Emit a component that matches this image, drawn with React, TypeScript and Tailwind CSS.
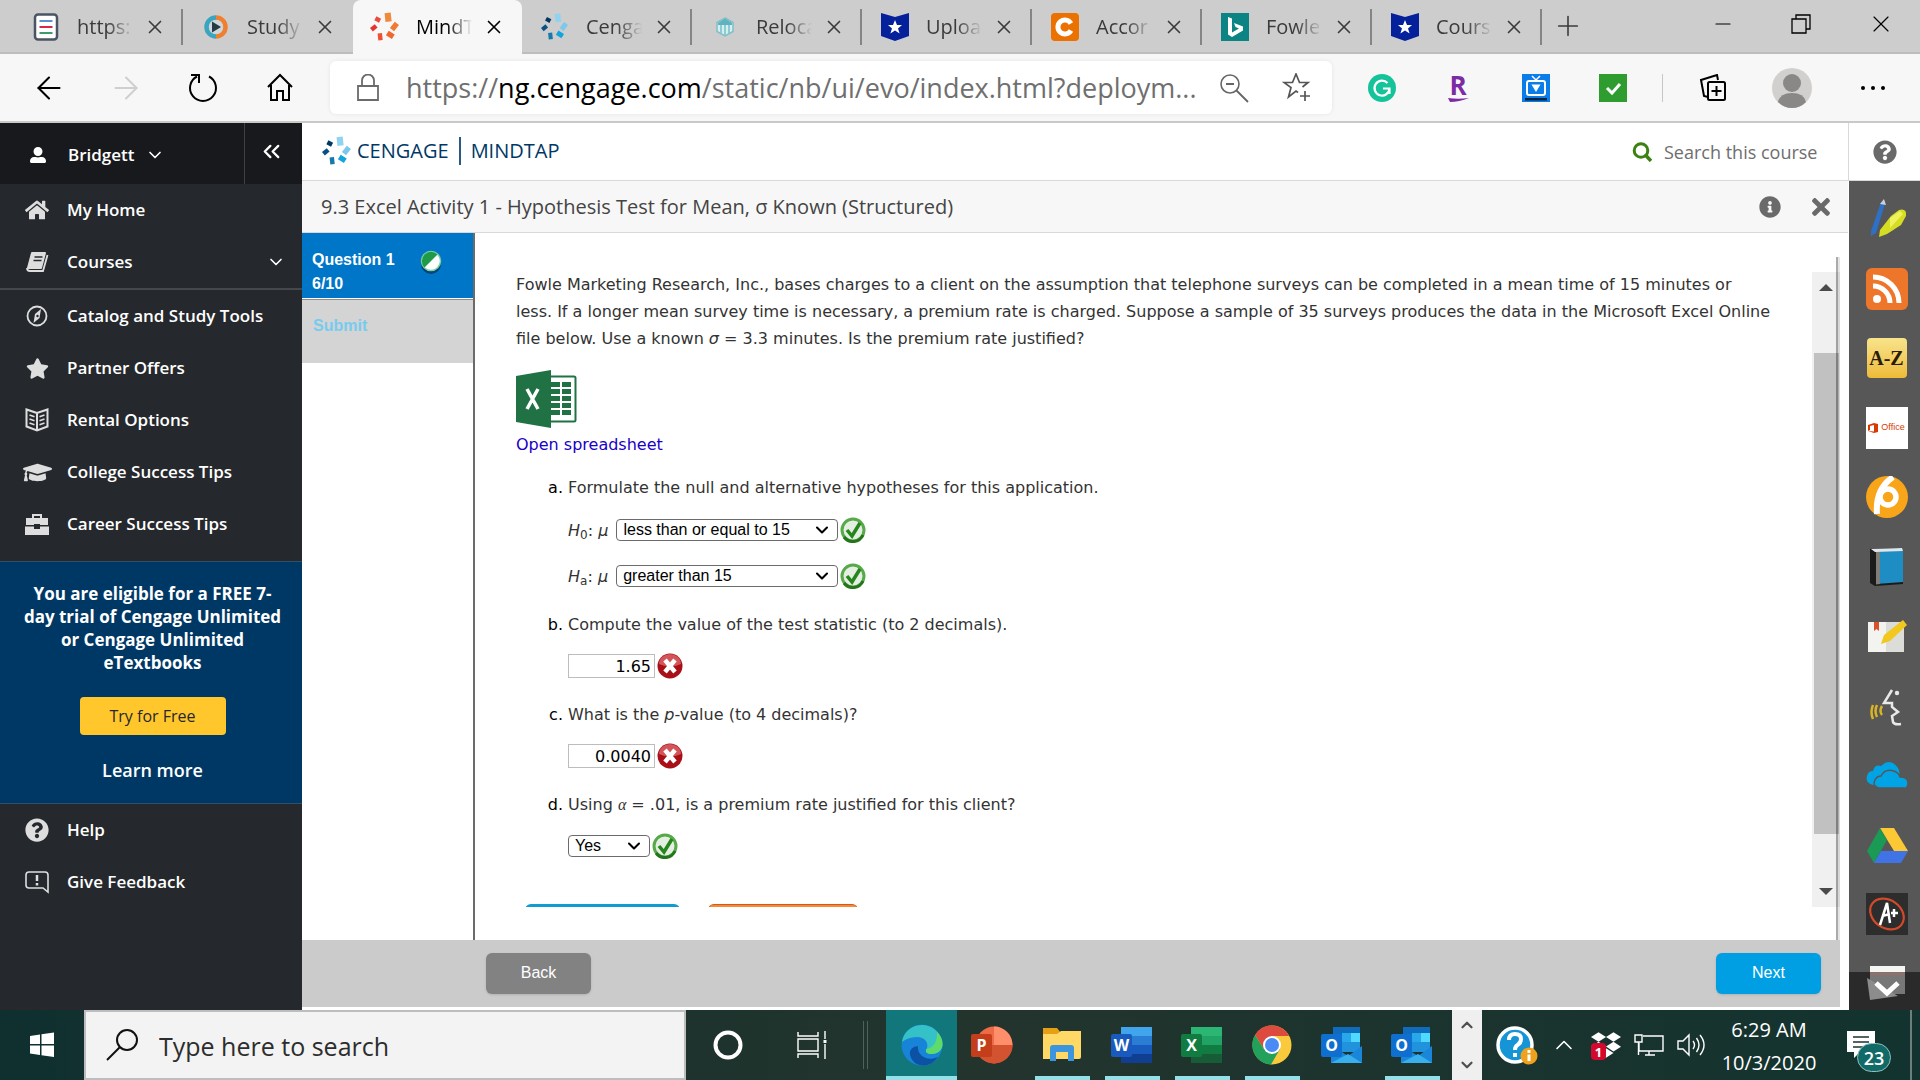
import React from "react";
import {
  ArrowLeft, ArrowRight, X, Plus, Minus, ChevronDown, ChevronUp, ChevronsLeft,
} from "lucide-react";
import { FaHome, FaStar, FaGraduationCap, FaQuestionCircle, FaInfoCircle, FaUserAlt, FaTimes, FaDropbox } from "react-icons/fa";

type Kids = { children: React.ReactNode };

function Svg({ s = 28, box = 28, children }: Kids & { s?: number; box?: number }) {
  return <svg width={s} height={s} viewBox={`0 0 ${box} ${box}`} fill="none" className="shrink-0" aria-hidden="true">{children}</svg>;
}

function Burst({ s = 34, c }: { s?: number; c: string[] }) {
  return (
    <Svg s={s} box={34}>
      <rect x="17" y="1" width="7" height="10" fill={c[0]} transform="rotate(-6 20 6)" />
      <rect x="6" y="6" width="6" height="5" fill={c[1]} transform="rotate(28 9 8)" />
      <rect x="1" y="15" width="7" height="5" fill={c[2]} transform="rotate(-40 5 18)" />
      <rect x="25" y="12" width="6" height="9" fill={c[3]} transform="rotate(38 28 16)" />
      <rect x="19" y="23" width="8" height="6" fill={c[4]} transform="rotate(32 23 26)" />
      <rect x="9" y="24" width="5" height="8" fill={c[5]} transform="rotate(-6 11 28)" />
    </Svg>
  );
}

const blues = ["#8fd3f0", "#003865", "#0a4f86", "#7cc8ec", "#12a5dc", "#1679ac"];
const oranges = ["#ee8a3b", "#e84c3d", "#e3342f", "#f07b32", "#f0662f", "#ef4f35"];

function ShieldStar() {
  return (
    <Svg>
      <path d="M0 0L14 4L28 0V23L14 28L0 23Z" fill="#04209b" />
      <path d="M14 7l2 5h5l-4 3.400 1.600 5.100L14 17.500l-4.600 3L11 15.400 7 12h5z" fill="#fff" />
    </Svg>
  );
}

const tabs: { title: string; icon: React.ReactNode; active?: boolean }[] = [
  {
    title: "https:",
    icon: <Svg><rect x="3" y="1.500" width="22" height="25" rx="3" fill="#fff" stroke="#4a5563" strokeWidth="2.500" /><path d="M7.500 8h13" stroke="#5b8fd0" strokeWidth="2" /><path d="M7.500 14h13" stroke="#d8254a" strokeWidth="2" /><path d="M7.500 20h13" stroke="#3c9c6b" strokeWidth="2" /></Svg>,
  },
  {
    title: "Study",
    icon: <Svg><path d="M14 4.500a9.500 9.500 0 0 0 0 19" stroke="#3aa5bf" strokeWidth="4.500" /><path d="M14 4.500a9.500 9.500 0 0 1 0 19" stroke="#f08030" strokeWidth="4.500" /><circle cx="14" cy="14" r="7" fill="#c9d9de" /><path d="M10 8.500l9 5.500-9 5.500z" fill="#2a3a44" /></Svg>,
  },
  { title: "MindT", icon: <Burst s={30} c={oranges} />, active: true },
  { title: "Cenga", icon: <Burst s={28} c={blues} /> },
  {
    title: "Reloca",
    icon: <Svg><path d="M14 5l8 4.500v9L14 23l-8-4.500v-9z" fill="#d7eef0" stroke="#7fc0c8" strokeWidth="1.500" /><path d="M7 10l7-4.500L21 10v2H7z" fill="#5fb3be" /><path d="M10 12v8M14 12v10M18 12v8" stroke="#8ccbd2" strokeWidth="2" /></Svg>,
  },
  { title: "Uploa", icon: <ShieldStar /> },
  {
    title: "Accor",
    icon: <Svg><rect width="28" height="28" rx="4" fill="#eb7100" /><path d="M20 10.500A7 7 0 1 0 20 17.500" stroke="#fff" strokeWidth="5" /></Svg>,
  },
  {
    title: "Fowle",
    icon: <Svg><rect width="28" height="28" fill="#0c8484" /><path d="M7 4l4 1.500v14l7-4-3.500-1.500-1.500-4 9 3.500v4l-11 6.500-4-2.500z" fill="#fff" /></Svg>,
  },
  { title: "Cours", icon: <ShieldStar /> },
];

function TabStrip() {
  return (
    <div className="flex h-[54px] shrink-0 items-stretch border-b-2 border-[#bdbdbd] bg-[#cdcdcd] pl-[13px] text-[#3b3b3b]">
      {tabs.map((t, i) => (
        <div
          key={i}
          className={
            t.active
              ? "-mb-[2px] flex w-[169px] shrink-0 items-center rounded-t-lg bg-[#f7f7f7] pl-[18px] text-black"
              : "flex w-[170px] shrink-0 items-center pt-px pl-[19px]"
          }
        >
          <span className="flex w-7 shrink-0 justify-center">{t.icon}</span>
          <span className="ml-[17px] w-[64px] overflow-hidden text-[20px] leading-7 whitespace-nowrap [mask-image:linear-gradient(to_right,#000_48%,transparent_88%)]">{t.title}</span>
          <button aria-label="Close tab" className="ml-[3px]"><X size={22} strokeWidth={1.8} /></button>
          {!t.active && i !== 1 && <span className="ml-auto h-9 w-[2px] bg-[#858585]" />}
        </div>
      ))}
      <button aria-label="New tab" className="ml-[10px]"><Plus size={32} strokeWidth={1.2} /></button>
      <div className="ml-auto flex items-center gap-[56px] pr-[25px] pb-1 text-black">
        <button aria-label="Minimise"><Minus size={24} strokeWidth={1.2} /></button>
        <button aria-label="Restore"><Svg s={20} box={20}><path d="M1 5h14v14H1zM5 5V1h14v14h-4" stroke="#000" strokeWidth="1.300" /></Svg></button>
        <button aria-label="Close"><X size={28} strokeWidth={1} /></button>
      </div>
    </div>
  );
}

function NavBar() {
  return (
    <div className="flex h-[69px] shrink-0 items-center border-b-2 border-[#c9c9c9] bg-[#f7f7f7]">
      <div className="flex items-center gap-[41px] pl-[31px]">
        <button aria-label="Back"><ArrowLeft size={36} strokeWidth={1.4} /></button>
        <button aria-label="Forward" className="text-[#cfcfcf]"><ArrowRight size={36} strokeWidth={1.4} /></button>
        <button aria-label="Reload"><Svg s={36} box={36}><path d="M24 6.500A13 13 0 1 1 12 6.500" stroke="#000" strokeWidth="2" /><path d="M6 5h8v8" stroke="#000" strokeWidth="2" /></Svg></button>
        <button aria-label="Home"><Svg s={36} box={36}><path d="M6 17L18 5l12 12M9 15v15h6v-9h6v9h6V15" stroke="#000" strokeWidth="2" /></Svg></button>
      </div>
      <div className="ml-[32px] flex h-[53px] min-w-0 flex-1 items-center rounded-md bg-white pr-5 pl-[24px] shadow-[0_0_4px_rgba(0,0,0,0.08)]">
        <Svg s={28} box={28}><path d="M4 12h20v14H4zM8 12V6.500a6 6 0 0 1 12 0V12" stroke="#6b6b6b" strokeWidth="1.800" /></Svg>
        <div className="ml-[24px] min-w-0 flex-1 overflow-hidden text-[27px] leading-10 whitespace-nowrap text-[#6f6f6f]">
          https://<span className="text-black">ng.cengage.com</span>/static/nb/ui/evo/index.html?deploym...
        </div>
        <button aria-label="Zoom"><Svg s={30} box={30}><circle cx="11" cy="11" r="9" stroke="#666" strokeWidth="1.600" /><path d="M7 11h8M17.500 17.500L29 29" stroke="#666" strokeWidth="1.800" /></Svg></button>
        <button aria-label="Add to favourites" className="ml-[33px]"><Svg s={30} box={30}><path d="M16 19.500L14 18l-7.500 6 2.500-9.500L2 9.500h8.500L14 1l3.500 8.500H26l-5.500 4.500M23 18v10M18 23h10" stroke="#555" strokeWidth="1.700" /></Svg></button>
      </div>
      <div className="ml-[36px] flex items-center">
        <Svg><circle cx="14" cy="14" r="14" fill="#15c39a" /><path d="M19.500 9A7.500 7.500 0 1 0 21.500 14.500H15M21.500 14.500V20" stroke="#fff" strokeWidth="2.200" /></Svg>
        <span className="ml-[49px]"><Svg><text x="13" y="21" textAnchor="middle" fontFamily="Open Sans" fontWeight="700" fontSize="26" fill="#7d2ba5">R</text><path d="M3 24q10 1.500 21 0-10 4-19 4z" fill="#7d2ba5" /></Svg></span>
        <span className="ml-[49px]"><Svg><rect width="28" height="28" fill="#0b7de8" /><rect x="3" y="24" width="22" height="2.500" fill="#06233f" /><rect x="5" y="7" width="18" height="14" rx="2" stroke="#fff" strokeWidth="2" /><path d="M10 2l4 4 4-4" stroke="#fff" strokeWidth="1.500" /><path d="M9.500 10.500h9L14 18z" fill="#fff" /></Svg></span>
        <span className="ml-[49px]"><Svg><rect width="28" height="28" fill="#2f9c2f" /><path d="M8 14l5 5 8-9" stroke="#fff" strokeWidth="3" /></Svg></span>
        <span className="ml-[35px] h-7 w-px bg-[#c6c6c6]" />
        <button aria-label="Collections" className="ml-[36px]"><Svg><path d="M9 23l-4-1L2 6l16-5 1 5" stroke="#000" strokeWidth="2" /><rect x="9" y="8" width="17" height="18" rx="1.500" stroke="#000" strokeWidth="2" /><path d="M17.500 12v10M12.500 17h10" stroke="#000" strokeWidth="2" /></Svg></button>
        <button aria-label="Profile" className="ml-[45px]"><Svg s={40} box={40}><circle cx="20" cy="20" r="20" fill="#d2d0ce" /><circle cx="20" cy="15" r="9" fill="#8a8886" /><path d="M6 34Q8 25 20 25T34 34Q28 40 20 40T6 34" fill="#8a8886" /></Svg></button>
        <button aria-label="Settings and more" className="mr-[32px] ml-[48px]"><Svg><circle cx="3" cy="14" r="2" fill="#000" /><circle cx="13" cy="14" r="2" fill="#000" /><circle cx="23" cy="14" r="2" fill="#000" /></Svg></button>
      </div>
    </div>
  );
}

function SideLink({ icon, label, arrow }: { icon: React.ReactNode; label: string; arrow?: boolean }) {
  return (
    <a href="#" className="flex h-[52px] items-center pr-4 pl-[22px] text-[17px] leading-6 font-semibold text-white">
      <span className="flex w-[30px] shrink-0 justify-center text-[#dedede]">{icon}</span>
      <span className="ml-[15px]">{label}</span>
      {arrow && <ChevronDown size={20} className="ml-auto" />}
    </a>
  );
}

function Sidebar() {
  return (
    <nav className="flex w-[302px] shrink-0 flex-col bg-[#25282c]">
      <div className="flex h-[61px] shrink-0 items-stretch bg-[#18191d] text-white">
        <button className="flex flex-1 items-center pt-[3px] pl-[30px] text-[17px] leading-6 font-semibold">
          <FaUserAlt size={16} />
          <span className="ml-[22px]">Bridgett</span>
          <ChevronDown size={20} className="ml-[10px]" />
        </button>
        <button aria-label="Collapse menu" className="flex w-[58px] items-center justify-center border-l border-[#3d4044] pr-1 pb-1"><ChevronsLeft size={27} /></button>
      </div>
      <SideLink icon={<FaHome size={24} />} label="My Home" />
      <SideLink arrow label="Courses" icon={<Svg s={24} box={24}><path d="M7 3h13l-4 15H3z" fill="#dedede" stroke="#dedede" strokeWidth="2" strokeLinejoin="round" /><path d="M9.500 7h8M8.500 10.500h8" stroke="#25282c" strokeWidth="1.400" /><path d="M2 18q0 3 3 3h13l4.500-16" stroke="#dedede" strokeWidth="1.800" /></Svg>} />
      <div className="h-[2px] bg-[#44474b]" />
      <div className="flex flex-col pb-[11px]">
        <SideLink label="Catalog and Study Tools" icon={<Svg s={22} box={22}><circle cx="11" cy="11" r="9.500" stroke="#dedede" strokeWidth="1.800" /><path d="M15 4l-1.500 9L7.500 18 9 9z" fill="#dedede" /><circle cx="11.500" cy="11" r="1.200" fill="#25282c" /></Svg>} />
        <SideLink label="Partner Offers" icon={<FaStar size={23} />} />
        <SideLink label="Rental Options" icon={<Svg s={24} box={24}><path d="M12 5L1.500 1.500v17L12 22.500l10.500-4v-17zM12 5v17" stroke="#dedede" strokeWidth="2" /><path d="M4.500 7l5 1.800M4.500 11l5 1.800M4.500 15l5 1.800M19.500 7l-5 1.800M19.500 11l-5 1.800M19.500 15l-5 1.800" stroke="#dedede" strokeWidth="1.600" /></Svg>} />
        <SideLink label="College Success Tips" icon={<FaGraduationCap size={29} />} />
        <SideLink label="Career Success Tips" icon={<Svg s={24} box={24}><path d="M8 6V3h8v3" stroke="#dedede" strokeWidth="2" /><path d="M1 6h22v7h-8v-1H9v1H1zM0 14.500h9V17h6v-2.500h9V23H0z" fill="#dedede" /></Svg>} />
      </div>
      <div className="flex flex-col items-center border-y border-[#2f5068] bg-[#003865] pt-5 pr-[17px] pb-[17px] pl-5 text-center text-white">
        <p className="text-[17px] leading-[23px] font-bold">You are eligible for a FREE 7-<br />day trial of Cengage Unlimited<br />or Cengage Unlimited<br />eTextbooks</p>
        <button className="mt-[23px] h-[38px] w-[146px] rounded bg-[#ffc72c] text-[16px] leading-6 text-[#25282c]">Try for Free</button>
        <a href="#" className="mt-[19px] text-[18px] leading-8 font-semibold">Learn more</a>
      </div>
      <div className="flex flex-col">
        <SideLink label="Help" icon={<FaQuestionCircle size={24} />} />
        <SideLink label="Give Feedback" icon={<Svg s={24} box={24}><path d="M4 2h16q3 0 3 3v17l-5-4H4q-3 0-3-3V5q0-3 3-3z" stroke="#dedede" strokeWidth="1.600" /><path d="M12 5v6M12 13v2.500" stroke="#dedede" strokeWidth="2.500" /></Svg>} />
      </div>
    </nav>
  );
}

function Good() {
  return (
    <Svg s={26} box={26}>
      <circle cx="13" cy="13" r="11" fill="#e4efe2" stroke="#57a94a" strokeWidth="3" />
      <path d="M4 20a11 11 0 0 0 19-2" stroke="#23741b" strokeWidth="3" />
      <path d="M7 13l5 6 8-13" stroke="#25861c" strokeWidth="3.500" />
    </Svg>
  );
}

function Bad() {
  return (
    <Svg s={26} box={26}>
      <circle cx="13" cy="13" r="12.500" fill="#a80f16" />
      <path d="M2 11a11 10 0 0 1 22 0q-11 5-22 0z" fill="#d2555a" />
      <path d="M8 7l10 12M18 7L8 19" stroke="#fff" strokeWidth="4.500" />
    </Svg>
  );
}

function Pick({ label, value, wide }: { label: string; value: string; wide?: boolean }) {
  return (
    <span className={wide ? "relative mr-[2px] ml-[3px] flex w-[222px]" : "relative mr-[2px] flex w-[82px]"}>
      <select aria-label={label} defaultValue={value} className="h-[22px] w-full appearance-none rounded-sm border border-[#6b6b6b] bg-white pl-[6px] font-[Liberation_Sans] text-[16px] leading-5 text-black">
        <option>{value}</option>
      </select>
      <ChevronDown size={20} strokeWidth={2.5} className="pointer-events-none absolute top-px right-[6px] text-black" />
    </span>
  );
}

function Numeric({ label, value }: { label: string; value: string }) {
  return <input aria-label={label} defaultValue={value} className="mr-[2px] h-6 w-[87px] border border-[#bdbdbd] bg-white pr-[3px] text-right text-[16px] leading-5 text-black" />;
}

function Item({ letter, children }: Kids & { letter: string }) {
  return (
    <li className="flex">
      <span className="w-[47px] shrink-0 text-right text-black">{letter}.</span>
      <div className="ml-[5px]">{children}</div>
    </li>
  );
}

function ExcelDoc() {
  return (
    <svg width="61" height="58" viewBox="0 0 61 58" aria-hidden="true">
      <rect x="30" y="6.500" width="29.500" height="45" rx="1.500" fill="#fff" stroke="#207245" strokeWidth="2" />
      <g fill="#207245">
        <path d="M35 12h9v5h-9zM46 12h9v5h-9zM35 19h9v5h-9zM46 19h9v5h-9zM35 26h9v5h-9zM46 26h9v5h-9zM35 33h9v5h-9zM46 33h9v5h-9zM35 40h9v5h-9zM46 40h9v5h-9z" />
        <path d="M0 6L35 0v58L0 52z" />
      </g>
      <path d="M11 19l11 20M22 19L11 39" stroke="#fff" strokeWidth="3.500" />
    </svg>
  );
}

function Question() {
  return (
    <div className="flex min-h-0 flex-1 pt-[38px] pb-[33px] font-[DejaVu_Sans] text-[16px] leading-[27px] text-[#333]">
      <div className="min-w-0 flex-1 overflow-hidden pl-[41px]">
        <p className="whitespace-nowrap">
          Fowle Marketing Research, Inc., bases charges to a client on the assumption that telephone surveys can be completed in a mean time of 15 minutes or<br />
          less. If a longer mean survey time is necessary, a premium rate is charged. Suppose a sample of 35 surveys produces the data in the Microsoft Excel Online<br />
          file below. Use a known <i>σ</i> = 3.3 minutes. Is the premium rate justified?
        </p>
        <div className="mt-[18px]"><ExcelDoc /></div>
        <a href="#" className="mt-[3px] block text-[#1a00c8]">Open spreadsheet</a>
        <ol className="mt-4">
          <Item letter="a">
            <p>Formulate the null and alternative hypotheses for this application.</p>
            <div className="mt-4 flex h-[26px] items-center whitespace-pre"><span><i>H</i><sub>0</sub>: <i>μ</i> </span><Pick wide label="Null hypothesis" value="less than or equal to 15" /><Good /></div>
            <div className="mt-[20px] mb-[22px] flex h-[26px] items-center whitespace-pre"><span><i>H</i><sub>a</sub>: <i>μ</i> </span><Pick wide label="Alternative hypothesis" value="greater than 15" /><Good /></div>
          </Item>
          <Item letter="b">
            <p>Compute the value of the test statistic (to 2 decimals).</p>
            <div className="mt-[15px] mb-[22px] flex h-[26px] items-center"><Numeric label="Test statistic" value="1.65" /><Bad /></div>
          </Item>
          <Item letter="c">
            <p>What is the <i>p</i>-value (to 4 decimals)?</p>
            <div className="mt-[15px] mb-[22px] flex h-[26px] items-center"><Numeric label="p-value" value="0.0040" /><Bad /></div>
          </Item>
          <Item letter="d">
            <p>Using <i className="font-[Liberation_Serif]">α</i> = .01, is a premium rate justified for this client?</p>
            <div className="mt-[15px] flex h-[26px] items-center"><Pick label="Premium rate justified" value="Yes" /><Good /></div>
          </Item>
        </ol>
        <div className="mt-[45px] flex gap-[28px] pl-[9px]">
          <button aria-label="Check my work" className="h-9 w-[155px] rounded-md bg-[#129ad2] shadow" />
          <button aria-label="Reset problem" className="h-9 w-[150px] rounded-md border-t border-[#cf5a1c] bg-[#f58a3c] shadow" />
        </div>
      </div>
      <div className="mt-px flex w-7 shrink-0 flex-col items-center bg-[#f0f0f0]">
        <span className="mt-3 h-0 w-0 border-x-[7px] border-b-[7px] border-x-transparent border-b-[#4a4a4a]" />
        <span className="mt-[62px] w-[25px] flex-1 bg-[#c1c1c1]" />
        <span className="mt-[54px] mb-3 h-0 w-0 border-x-[7px] border-t-[7px] border-x-transparent border-t-[#4a4a4a]" />
      </div>
    </div>
  );
}

function Activity() {
  return (
    <div className="flex min-h-0 flex-1 flex-col pb-[3px]">
      <div className="flex min-h-0 flex-1">
        <div className="w-[173px] shrink-0 border-r-2 border-[#6b6b6b] font-[Liberation_Sans] text-[16px] leading-6 font-bold">
          <a href="#" className="flex h-[65px] justify-between bg-[#0076c8] pt-[15px] pr-[29px] pl-[10px] text-white">
            <span>Question 1<br />6/10</span>
            <Svg s={26} box={26}><circle cx="13" cy="16" r="10" fill="#00457a" /><circle cx="13" cy="13" r="9.500" fill="#fff" stroke="#7fd0a0" strokeWidth="1.500" /><path d="M6.500 19.500A9 9 0 0 1 19.500 6.500z" fill="#1f9a48" /></Svg>
          </a>
          <div className="mt-px h-[64px] border-t border-[#8d8d8d] bg-[#d4d4d4] pt-[14px] pl-[11px] text-[#78cbee]">Submit</div>
        </div>
        <Question />
        <div className="relative w-2">
          <span className="absolute top-6 bottom-0 -left-1 w-1 border-l-2 border-black/25 bg-black/10" />
        </div>
      </div>
      <div className="mr-2 flex h-[67px] shrink-0 items-center justify-between bg-[#cbcbcb] pr-[19px] pl-[184px] font-[Liberation_Sans] text-[16px] text-white">
        <button className="h-[41px] w-[105px] rounded-md bg-[#828282] pb-[2px] shadow">Back</button>
        <button className="h-[41px] w-[105px] rounded-md bg-[#009fe3] pb-[2px] shadow">Next</button>
      </div>
    </div>
  );
}

const tools: React.ReactNode[] = [
  <Svg s={42} box={42}><path d="M15 4l4 2-9 29-5 3v-5z" fill="#2f6fc4" /><path d="M14 6l4-5 2 6z" fill="#c8d2dc" /><path d="M25 18l8-6q8-2 7 6l-5 9-14 9-8 3 1-7z" fill="#d5de23" /><path d="M24 20l10-7 3 3-13 14z" fill="#eef25c" /></Svg>,
  <Svg s={42} box={42}><rect width="42" height="42" rx="6" fill="#ee762b" /><circle cx="11" cy="31" r="4" fill="#fff" /><path d="M7 18a17 17 0 0 1 17 17M7 9a26 26 0 0 1 26 26" stroke="#fff" strokeWidth="5" /></Svg>,
  <span className="flex h-10 w-10 items-center justify-center rounded-sm bg-linear-to-b from-[#f8e48a] to-[#eebb35] font-[Liberation_Serif] text-[20px] leading-6 font-bold text-[#2b1c08]">A-Z</span>,
  <span className="flex h-[42px] w-[42px] items-center justify-center gap-[3px] bg-white font-[Liberation_Sans] text-[9px] text-[#d83b01]"><Svg s={10} box={10}><path d="M0 2l6-2 4 1v8l-4 1-6-2 6 .5V2L2 3v4L0 8z" fill="#d83b01" /></Svg>Office</span>,
  <Svg s={42} box={42}><circle cx="21" cy="21" r="21" fill="#f9a51a" /><path d="M27 1Q9 13 11 38" stroke="#fff" strokeWidth="6" /><circle cx="22" cy="21" r="8" stroke="#fff" strokeWidth="5.500" /></Svg>,
  <Svg s={42} box={42}><path d="M4 3l31-1 2 3v33l-28 2-5-3z" fill="#1b1b1b" /><path d="M10 5h27v31l-27 2z" fill="#1e8dc4" /><path d="M10 5h4v33l-4 .500z" fill="#807c78" /><path d="M5 3l31-1 1 3-28 1z" fill="#dfe7ea" /></Svg>,
  <Svg s={42} box={42}><path d="M2 7h36v30H2z" fill="#f3f3f0" /><path d="M20 7h18v30H20z" fill="#dcdcd8" /><path d="M8 7h5v9l-2.500-2L8 16z" fill="#d9512c" /><path d="M37 5l4 5-17 16-9 3 3-9z" fill="#f2c81f" /></Svg>,
  <Svg s={42} box={42}><path d="M26 5l-8 13h8v4l6 5-6 4 1 6q1 3 8 2" stroke="#e9e9e9" strokeWidth="2.500" /><circle cx="31" cy="8" r="2.200" fill="#e9e9e9" /><path d="M7 20q-3 7 0 14M11 20q-3 6 0 12M16 21q-3 5 0 9" stroke="#d8b526" strokeWidth="2.500" /></Svg>,
  <Svg s={42} box={42}><path d="M7 31q-8-2-6-9 1-5 6-5 2-7 8-5 9-9 17 2 3 5 0 9z" fill="#00a3e4" /><path d="M13 34q-7-2-4-8 2-4 6-4 4-8 13-5 5 2 6 6 8 0 8 6t-5 5z" fill="#00a3e4" stroke="#575757" strokeWidth="1.500" /></Svg>,
  <Svg s={42} box={42}><path d="M14 4h14l14 23H28z" fill="#fcc934" /><path d="M14 4l7 12L8 39 1 27z" fill="#1a9a55" /><path d="M15 27h27l-7 12H8z" fill="#3f73e6" /></Svg>,
  <Svg s={42} box={42}><rect width="42" height="42" fill="#2d2d2d" /><ellipse cx="21" cy="21" rx="18" ry="14" stroke="#d24a2a" strokeWidth="2.200" transform="rotate(35 21 21)" /><path d="M14 32l7-22 3 20M16 23l8-2M25 20h7M28 16v8" stroke="#fff" strokeWidth="2.500" /></Svg>,
];

function ToolRail() {
  return (
    <aside className="flex w-[72px] shrink-0 flex-col">
      <button aria-label="Help" className="flex h-[58px] items-center justify-center border-b border-l border-[#d9d9d9] bg-white text-[#6a6a6a]"><FaQuestionCircle size={24} /></button>
      <div className="ml-px flex min-h-0 flex-1 flex-col bg-[#575757]">
        <div className="flex min-h-0 flex-1 flex-col items-center justify-between pt-[17px] pb-[37px] pl-1">
          {tools.map((t, i) => <button key={i} aria-label={`Tool ${i + 1}`} className="flex h-[42px] w-[42px] items-center justify-center">{t}</button>)}
        </div>
        <button aria-label="More tools" className="flex h-[38px] w-full flex-col items-center justify-end bg-[#2a2a2a] pb-[6px] pl-1">
          <svg width="42" height="38" viewBox="0 0 42 38" className="shrink-0" aria-hidden="true"><path d="M4 0h35v28H4z" fill="#777" /><path d="M4 0h35v6H4z" fill="#f5f5f2" /><path d="M1 12l3 22 28-4" fill="#8c8c8c" /><path d="M4 8h35" stroke="#a06a62" strokeWidth="1.500" /><path d="M10 17l11 10 11-10" fill="none" stroke="#fff" strokeWidth="5" /></svg>
        </button>
      </div>
    </aside>
  );
}

function Course() {
  return (
    <main className="flex min-w-0 flex-1 flex-col bg-white">
      <header className="flex h-[58px] shrink-0 items-center justify-between border-b border-[#d9d9d9] pr-[24px] pl-[20px] text-[#003865]">
        <div className="flex items-center pb-px text-[20px] leading-7">
          <Burst s={30} c={blues} />
          <span className="ml-[5px]">CENGAGE</span>
          <span className="mx-[10px] h-7 w-[2px] bg-[#2b5a80]" />
          <span>MINDTAP</span>
        </div>
        <label className="flex items-center gap-[12px]">
          <Svg s={20} box={20}><circle cx="9" cy="8.500" r="6.800" stroke="#3b8212" strokeWidth="3" /><path d="M13.500 13L19 19" stroke="#3b8212" strokeWidth="3.500" /></Svg>
          <input placeholder="Search this course" className="w-[160px] text-[18px] leading-6 placeholder:text-[#6e6e6e]" />
        </label>
      </header>
      <div className="flex h-[52px] shrink-0 items-center border-b border-[#d9d9d9] bg-[#f7f7f7] pr-[14px] pl-[19px] text-[#6a6a6a]">
        <h1 className="flex-1 text-[20px] leading-7 text-[#444]">9.3 Excel Activity 1 - Hypothesis Test for Mean, σ Known (Structured)</h1>
        <button aria-label="Information"><FaInfoCircle size={22} /></button>
        <button aria-label="Close activity" className="ml-[27px]"><FaTimes size={26} /></button>
      </div>
      <Activity />
    </main>
  );
}

function Office({ letter, dark, c, round }: { letter: string; dark: string; c: string[]; round?: boolean }) {
  return (
    <svg width="42" height="42" viewBox="0 0 42 42" aria-hidden="true">
      {round ? (
        <g><circle cx="23" cy="21" r="18.500" fill={c[0]} /><path d="M23 2.500A18.500 18.500 0 0 1 41.500 21H23z" fill={c[1]} /><path d="M4.500 21h37a18.500 18.500 0 0 1-37 0z" fill={c[2]} /></g>
      ) : (
        <g><path d="M10 3h31v9H10z" fill={c[0]} /><path d="M10 12h31v9H10z" fill={c[1]} /><path d="M10 21h31v9H10z" fill={c[2]} /><path d="M10 30h31v9H10z" fill={c[3]} /></g>
      )}
      <rect x="0" y="10" width="21" height="23" rx="2" fill={dark} />
      <text x="10.500" y="27" textAnchor="middle" fontFamily="Open Sans" fontWeight="700" fontSize="16" fill="#fff">{letter}</text>
    </svg>
  );
}

function Outlook() {
  return (
    <svg width="42" height="42" viewBox="0 0 42 42" aria-hidden="true">
      <path d="M12 3h27v20H12z" fill="#0f6cbd" /><path d="M21 9h9v9h-9z" fill="#28a8ea" /><path d="M30 9h9v9h-9z" fill="#50d9ff" /><path d="M21 18h18v10H21z" fill="#2093dc" />
      <path d="M10 21l17 11 14-10v17H10z" fill="#1a86d9" /><path d="M10 39l17-9 14 9z" fill="#38b0ee" />
      <rect x="0" y="10" width="21" height="23" rx="2" fill="#0f6fd0" />
      <text x="10.500" y="27" textAnchor="middle" fontFamily="Open Sans" fontWeight="700" fontSize="16" fill="#fff">O</text>
    </svg>
  );
}

const apps: { name: string; icon: React.ReactNode; open?: boolean; current?: boolean }[] = [
  {
    name: "Edge", open: true, current: true,
    icon: <Svg s={42} box={42}><circle cx="21" cy="21" r="20.500" fill="#1784d8" /><path d="M1 18C4-4 38-6 41.500 20c0 7-6 10-11 10-4 0-7-2-5-5 3-6-2-12-9-12S3 16 1 18z" fill="#35c1c8" /><path d="M36 8q6 6 5.500 12c0 7-6 10-11 10-4 0-7-2-5-5 8-1 11-9 10.500-17z" fill="#5fdb6c" /><path d="M17 22c-1 10 9 16 20 11C28 46 12 43 9 31q-1-8 8-9z" fill="#0c52a4" /></Svg>,
  },
  { name: "PowerPoint", icon: <Office round letter="P" dark="#c43e1c" c={["#ed6c47", "#ff8f6b", "#d35230"]} /> },
  {
    name: "File Explorer", open: true,
    icon: <svg width="38" height="34" viewBox="0 0 38 34" aria-hidden="true"><path d="M0 0h14l4 5v5H0z" fill="#e7a013" /><path d="M0 6h14l4-3h20v26q0 2-2 2H0z" fill="#ffd866" /><path d="M7 33V20q0-3 3-3h18q3 0 3 3v13h-6v-9H13v9z" fill="#3d95dd" /></svg>,
  },
  { name: "Word", open: true, icon: <Office letter="W" dark="#185abd" c={["#41a5ee", "#2b7cd3", "#185abd", "#103f91"]} /> },
  { name: "Excel", open: true, icon: <Office letter="X" dark="#107c41" c={["#2bb673", "#21a366", "#107c41", "#185c37"]} /> },
  {
    name: "Chrome", open: true,
    icon: <Svg s={40} box={40}><circle cx="20" cy="20" r="19.500" fill="#fbc93c" /><path d="M3 10A19.500 19.500 0 0 1 37 11H20L12 24z" fill="#dd4b3e" /><path d="M3 10A19.500 19.500 0 0 0 19 39.500L28 24H12z" fill="#23a05a" /><circle cx="20" cy="20" r="9" fill="#fff" /><circle cx="20" cy="20" r="7" fill="#4a8af4" /></Svg>,
  },
  { name: "Outlook", icon: <Outlook /> },
  { name: "Outlook inbox", open: true, icon: <Outlook /> },
];

function Taskbar() {
  return (
    <footer className="flex h-[70px] shrink-0 items-stretch bg-linear-to-r from-[#0f302f] via-[#23342d] to-[#12332f] text-white">
      <button aria-label="Start" className="flex w-[84px] items-center justify-center"><Svg s={26} box={26}><path d="M1 4l10-1.500V12H1zM12.500 2.200L25 .500V12H12.500zM1 13.500h10V23L1 21.500zM12.500 13.500H25V25l-12.500-1.700z" fill="#fff" /></Svg></button>
      <label className="flex w-[602px] items-center border-2 border-[#bcbdbc] bg-[#f2f3f2] pl-[19px]">
        <Svg s={34} box={34}><circle cx="22" cy="12" r="10" stroke="#111" strokeWidth="2" /><path d="M15 19L2 32" stroke="#111" strokeWidth="2" /></Svg>
        <input placeholder="Type here to search" className="ml-5 w-[400px] pt-[2px] text-[25px] leading-8 placeholder:text-[#2d2d2d]" />
      </label>
      <div className="flex items-center pl-[27px]">
        <button aria-label="Cortana"><Svg s={30} box={30}><circle cx="15" cy="15" r="12.500" stroke="#fff" strokeWidth="4" /></Svg></button>
        <button aria-label="Task view" className="ml-[54px]"><Svg s={30} box={30}><path d="M1 2v4h20V2M1 28v-4h20v4M1 9h20v12H1zM28 1v8M28 14v15" stroke="#fff" strokeWidth="1.400" /><path d="M26.500 10h3v3h-3z" fill="#fff" /></Svg></button>
        <span className="ml-[36px] h-12 w-[5px] border-x border-[#52615b]" />
      </div>
      <div className="ml-[18px] flex">
        {apps.map((a) => (
          <button key={a.name} aria-label={a.name} className={a.current ? "flex w-[71px] flex-col items-center bg-[#12777a]" : "flex w-[70px] flex-col items-center"}>
            <span className="flex flex-1 items-center pt-1">{a.icon}</span>
            <span className={a.open ? (a.current ? "h-1 w-full bg-[#93e0e8]" : "h-1 w-[55px] bg-[#93e0e8]") : "h-1 w-full"} />
          </button>
        ))}
      </div>
      <div className="ml-[5px] flex w-[30px] flex-col items-center justify-between bg-[#efefef] py-[6px] text-[#505050]">
        <ChevronUp size={18} strokeWidth={3} />
        <ChevronDown size={18} strokeWidth={3} />
      </div>
      <div className="flex flex-1 items-center justify-end">
        <span className="pt-1"><Svg s={42} box={42}><circle cx="19" cy="19" r="17" fill="#1594d6" stroke="#fff" strokeWidth="3.500" /><path d="M13 14q0-6 6-6t6 5q0 4-3.500 6-2.500 1.500-2.500 5M19 27v4" stroke="#fff" strokeWidth="4" /><circle cx="33" cy="30" r="8.500" fill="#f0a21c" /><path d="M33 24v3M33 28.500V35" stroke="#fff" strokeWidth="3" /></Svg></span>
        <ChevronUp size={28} strokeWidth={1.400} className="ml-3" />
        <span className="relative ml-[13px]">
          <FaDropbox size={30} />
          <span className="absolute top-[13px] left-0 flex h-[17px] w-[15px] items-center justify-center rounded-sm bg-[#d4092e] text-[13px] leading-4 font-bold">1</span>
        </span>
        <span className="ml-[13px]"><Svg s={30} box={30}><path d="M9 6h20v15H5V13M15 21v4M11 25h10M1 5h7v7H1zM4.500 12v13" stroke="#fff" strokeWidth="1.400" /></Svg></span>
        <span className="ml-3"><Svg s={30} box={30}><path d="M2 11h5l6-6v20l-6-6H2zM17 11q3 4 0 8M20.500 8q5 7 0 14M24 5q8 10 0 20" stroke="#fff" strokeWidth="1.400" /></Svg></span>
        <div className="ml-[14px] w-[98px] pt-[2px] text-center text-[20px] leading-[33px] whitespace-nowrap">6:29 AM<br />10/3/2020</div>
        <button aria-label="Notifications" className="relative ml-[29px] w-[48px] self-stretch">
          <span className="absolute top-[20px] left-0"><Svg s={28} box={28}><path d="M0 1h28v21H13l-6 6v-6H0z" fill="#fff" /><path d="M6 7h16M6 12h16M6 17h10" stroke="#20302c" strokeWidth="1.500" /></Svg></span>
          <span className="absolute top-[33px] left-[10px] flex h-[29px] w-[34px] items-center justify-center rounded-full border border-[#8fc0bd] bg-[#126a68] text-[18px] leading-6 font-semibold">23</span>
        </button>
        <span className="mr-2 ml-[15px] h-full w-[2px] bg-[#6d7f7b]" />
      </div>
    </footer>
  );
}

export default function App() {
  return (
    <div className="flex h-screen flex-col overflow-hidden bg-white font-[Open_Sans,sans-serif]">
      <TabStrip />
      <NavBar />
      <div className="flex min-h-0 flex-1">
        <Sidebar />
        <Course />
        <ToolRail />
      </div>
      <Taskbar />
    </div>
  );
}
